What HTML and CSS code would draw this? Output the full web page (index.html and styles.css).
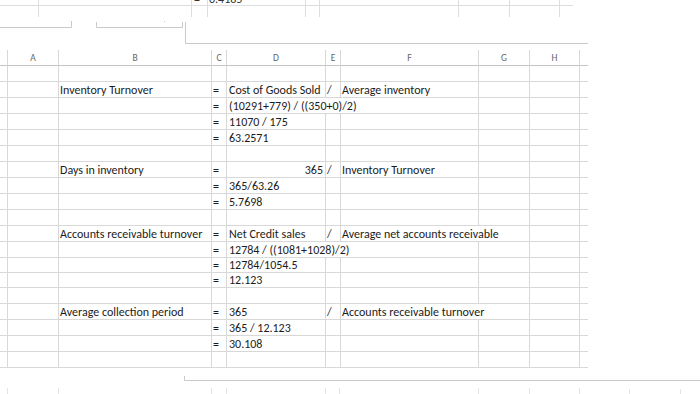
FILE: index.html
```html
<!DOCTYPE html>
<html>
<head>
<meta charset="utf-8">
<link rel="stylesheet" href="styles.css">
</head>
<body>
<svg class="frag" width="700" height="50" viewBox="0 0 700 50">
  <g class="grid-frag">
    <path d="M0 5.5H573"/>
    <path d="M38.5 0V17M191.5 0V17M207.5 0V17M305.5 0V17M319.5 0V17M458.5 0V17M509.5 0V17M559.5 0V17"/>
  </g>
  <text class="frag-text" x="194" y="3">=</text>
  <text class="frag-text" x="209" y="3">0.4185</text>
  <g class="bracket">
    <path d="M0 27.5H71.5V21"/>
    <path d="M96.5 22V27.5H182.5V22"/>
    <path d="M185.5 22V43.5H588"/>
    <path d="M164 21.5h1"/>
  </g>
</svg>

<div class="sheet">
  <div class="row hdr">
    <div class="rn"></div><div class="c">A</div><div class="c">B</div><div class="c">C</div><div class="c">D</div><div class="c">E</div><div class="c">F</div><div class="c">G</div><div class="c">H</div><div class="c"></div>
  </div>

  <div class="row"><div class="rn"></div><div class="c"></div><div class="c"></div><div class="c"></div><div class="c"></div><div class="c"></div><div class="c"></div><div class="c"></div><div class="c"></div><div class="c"></div></div>

  <div class="row"><div class="rn"></div><div class="c"></div><div class="c">Inventory Turnover</div><div class="c">=</div><div class="c d">Cost of Goods Sold</div><div class="c">/</div><div class="c">Average inventory</div><div class="c"></div><div class="c"></div><div class="c"></div></div>
  <div class="row"><div class="rn"></div><div class="c"></div><div class="c"></div><div class="c">=</div><div class="c d sp3">(10291+779) / ((350+0)/2)</div><div class="c"></div><div class="c"></div><div class="c"></div></div>
  <div class="row"><div class="rn"></div><div class="c"></div><div class="c"></div><div class="c">=</div><div class="c d">11070 / 175</div><div class="c"></div><div class="c"></div><div class="c"></div><div class="c"></div><div class="c"></div></div>
  <div class="row"><div class="rn"></div><div class="c"></div><div class="c"></div><div class="c">=</div><div class="c d">63.2571</div><div class="c"></div><div class="c"></div><div class="c"></div><div class="c"></div><div class="c"></div></div>
  <div class="row"><div class="rn"></div><div class="c"></div><div class="c"></div><div class="c"></div><div class="c"></div><div class="c"></div><div class="c"></div><div class="c"></div><div class="c"></div><div class="c"></div></div>

  <div class="row"><div class="rn"></div><div class="c"></div><div class="c">Days in inventory</div><div class="c">=</div><div class="c num">365</div><div class="c">/</div><div class="c">Inventory Turnover</div><div class="c"></div><div class="c"></div><div class="c"></div></div>
  <div class="row"><div class="rn"></div><div class="c"></div><div class="c"></div><div class="c">=</div><div class="c d">365/63.26</div><div class="c"></div><div class="c"></div><div class="c"></div><div class="c"></div><div class="c"></div></div>
  <div class="row"><div class="rn"></div><div class="c"></div><div class="c"></div><div class="c">=</div><div class="c d">5.7698</div><div class="c"></div><div class="c"></div><div class="c"></div><div class="c"></div><div class="c"></div></div>
  <div class="row"><div class="rn"></div><div class="c"></div><div class="c"></div><div class="c"></div><div class="c"></div><div class="c"></div><div class="c"></div><div class="c"></div><div class="c"></div><div class="c"></div></div>

  <div class="row"><div class="rn"></div><div class="c"></div><div class="c">Accounts receivable turnover</div><div class="c">=</div><div class="c d">Net Credit sales</div><div class="c">/</div><div class="c sp2">Average net accounts receivable</div><div class="c"></div><div class="c"></div></div>
  <div class="row"><div class="rn"></div><div class="c"></div><div class="c"></div><div class="c">=</div><div class="c d sp3">12784 / ((1081+1028)/2)</div><div class="c"></div><div class="c"></div><div class="c"></div></div>
  <div class="row short"><div class="rn"></div><div class="c"></div><div class="c"></div><div class="c">=</div><div class="c d">12784/1054.5</div><div class="c"></div><div class="c"></div><div class="c"></div><div class="c"></div><div class="c"></div></div>
  <div class="row short"><div class="rn"></div><div class="c"></div><div class="c"></div><div class="c">=</div><div class="c d">12.123</div><div class="c"></div><div class="c"></div><div class="c"></div><div class="c"></div><div class="c"></div></div>
  <div class="row"><div class="rn"></div><div class="c"></div><div class="c"></div><div class="c"></div><div class="c"></div><div class="c"></div><div class="c"></div><div class="c"></div><div class="c"></div><div class="c"></div></div>

  <div class="row"><div class="rn"></div><div class="c"></div><div class="c">Average collection period</div><div class="c">=</div><div class="c d">365</div><div class="c">/</div><div class="c sp2">Accounts receivable turnover</div><div class="c"></div><div class="c"></div></div>
  <div class="row"><div class="rn"></div><div class="c"></div><div class="c"></div><div class="c">=</div><div class="c d">365 / 12.123</div><div class="c"></div><div class="c"></div><div class="c"></div><div class="c"></div><div class="c"></div></div>
  <div class="row"><div class="rn"></div><div class="c"></div><div class="c"></div><div class="c">=</div><div class="c d">30.108</div><div class="c"></div><div class="c"></div><div class="c"></div><div class="c"></div><div class="c"></div></div>
  <div class="row"><div class="rn"></div><div class="c"></div><div class="c"></div><div class="c"></div><div class="c"></div><div class="c"></div><div class="c"></div><div class="c"></div><div class="c"></div><div class="c"></div></div>
</div>

<svg class="frag" width="700" height="26" viewBox="0 0 700 26">
  <g class="bracket">
    <path d="M184.5 8V12.5H700"/>
  </g>
  <g class="ticks">
    <path d="M7.5 20V26M58.5 20V26M211.5 20V26M226.5 20V26M325.5 20V26M339.5 20V26M478.5 20V26M529.5 20V26M579.5 20V26M629.5 21V26M680.5 21V26"/>
  </g>
</svg>
</body>
</html>
```

FILE: styles.css
```css
html, body {
  margin: 0;
  padding: 0;
  background: #ffffff;
}

body {
  width: 700px;
  height: 394px;
  overflow: hidden;
  font-family: "Carlito", "Lato", "Liberation Sans", sans-serif;
  color: #1c1c1c;
}

.frag {
  display: block;
}

.grid-frag path {
  stroke: #dedede;
  stroke-width: 1;
  fill: none;
}

.frag-text {
  font-family: "Carlito", "Lato", sans-serif;
  font-size: 12px;
  fill: #333;
}

.bracket path {
  stroke: #c9c9c9;
  stroke-width: 1;
  fill: none;
}

.ticks path {
  stroke: #e4e4e4;
  stroke-width: 1;
  fill: none;
}

.sheet {
  display: flex;
  flex-direction: column;
  width: 588px;
}

.row {
  display: grid;
  grid-template-columns: 7px 51px 153px 15px 99px 15px 138px 51px 50px 9px;
  height: 16px;
  font-size: 12px;
  line-height: 16px;
}

.row.short {
  height: 15px;
  line-height: 15px;
}

.rn {
  border-bottom: 1px solid #d8d8d8;
}

.c {
  box-sizing: border-box;
  border-left: 1px solid #d8d8d8;
  border-bottom: 1px solid #d8d8d8;
  padding-left: 1px;
  white-space: nowrap;
  overflow: hidden;
}

.c.d {
  padding-left: 2px;
}

.sp3 {
  grid-column: span 3;
}

.sp2 {
  grid-column: span 2;
}

.num {
  text-align: right;
  padding-right: 2px;
}

.hdr {
  font-size: 9.5px;
  color: #666666;
  line-height: 17px;
}

.hdr .c {
  text-align: center;
  padding-left: 0;
  border-bottom-color: #c4c4c4;
}

.hdr .rn {
  border-bottom-color: #c4c4c4;
}
```
